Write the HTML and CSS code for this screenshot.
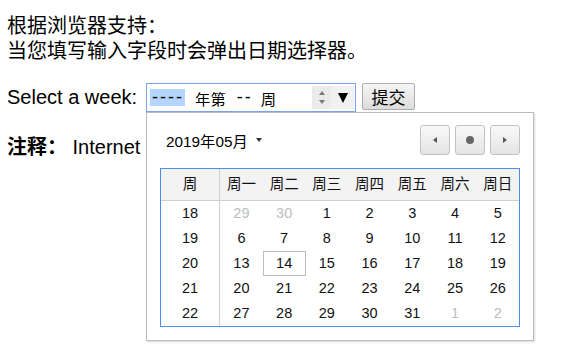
FILE: index.html
```html
<!DOCTYPE html>
<html lang="zh">
<head>
  <meta charset="UTF-8" />
  <title>week 选择器</title>
  <link rel="stylesheet" href="styles.css">
</head>
<body>
<p class="intro">根据浏览器支持：<br>当您填写输入字段时会弹出日期选择器。</p>

<form class="week-form">
  <label class="week-label">Select a week:</label>
  <div class="week-field">
    <div class="week-input">
      <span class="seg seg-active">----</span>
      <span class="txt txt-first">年第</span>
      <span class="seg seg-week">--</span>
      <span class="txt">周</span>
      <span class="spin"><i class="spin-up"></i><i class="spin-down"></i></span>
      <span class="drop"><i class="drop-arrow"></i></span>
    </div>

    <!-- 弹出的日期选择器 -->
    <div class="picker">
      <div class="picker-head">
        <div class="month">2019年05月<i class="caret"></i></div>
        <div class="nav">
          <span class="nav-btn"><i class="tri-left"></i></span>
          <span class="nav-btn"><i class="dot"></i></span>
          <span class="nav-btn"><i class="tri-right"></i></span>
        </div>
      </div>
      <div class="cal">
        <div class="hd wk">周</div><div class="hd">周一</div><div class="hd">周二</div><div class="hd">周三</div><div class="hd">周四</div><div class="hd">周五</div><div class="hd">周六</div><div class="hd">周日</div>

        <div class="day wk">18</div><div class="day other">29</div><div class="day other">30</div><div class="day">1</div><div class="day">2</div><div class="day">3</div><div class="day">4</div><div class="day">5</div>
        <div class="day wk">19</div><div class="day">6</div><div class="day">7</div><div class="day">8</div><div class="day">9</div><div class="day">10</div><div class="day">11</div><div class="day">12</div>
        <div class="day wk">20</div><div class="day">13</div><div class="day today">14</div><div class="day">15</div><div class="day">16</div><div class="day">17</div><div class="day">18</div><div class="day">19</div>
        <div class="day wk">21</div><div class="day">20</div><div class="day">21</div><div class="day">22</div><div class="day">23</div><div class="day">24</div><div class="day">25</div><div class="day">26</div>
        <div class="day wk">22</div><div class="day">27</div><div class="day">28</div><div class="day">29</div><div class="day">30</div><div class="day">31</div><div class="day other">1</div><div class="day other">2</div>
      </div>
    </div>
  </div>
  <button type="button" class="submit">提交</button>
</form>

<p class="note"><b>注释：</b> Internet Explorer 和 Firefox 不支持 type="week"。</p>
</body>
</html>
```

FILE: styles.css
```css
html {
  height: 100%;
}
body {
  margin: 0;
  padding: 14px 7px;
  min-height: 100%;
  box-sizing: border-box;
  font-family: "Liberation Sans", "Noto Sans CJK SC", sans-serif;
  font-size: 20px;
  color: #000;
  background: #fff;
}
.intro {
  margin: 0;
  line-height: 24.5px;
}
.week-form {
  display: flex;
  align-items: flex-start;
  margin-top: 20px;
}
.week-label {
  line-height: 29px;
  margin-right: 9px;
}
.week-field {
  position: relative;
}
.week-input {
  width: 210px;
  height: 29px;
  box-sizing: border-box;
  border: 1px solid #7aa7e8;
  display: flex;
  align-items: center;
  padding: 0 1px 0 3px;
  font-size: 15.3px;
  white-space: nowrap;
}
.seg {
  font-size: 18px;
  letter-spacing: 2px;
}
.seg-active {
  background: #b4d5fe;
  width: 35px;
  height: 17px;
  line-height: 17px;
  padding-left: 2px;
  box-sizing: border-box;
}
.seg-week {
  margin-left: 11px;
}
.txt {
  margin-left: 8px;
}
.txt-first {
  margin-left: 10px;
}
.spin {
  margin-left: auto;
  width: 19px;
  height: 23px;
  background: #ebebeb;
  display: flex;
  flex-direction: column;
  align-items: center;
  justify-content: center;
  gap: 5px;
}
.spin-up {
  border-left: 3.5px solid transparent;
  border-right: 3.5px solid transparent;
  border-bottom: 4px solid #7a7a7a;
}
.spin-down {
  border-left: 3.5px solid transparent;
  border-right: 3.5px solid transparent;
  border-top: 4px solid #7a7a7a;
}
.drop {
  width: 23px;
  height: 23px;
  background: #f1f1f1;
  display: flex;
  align-items: center;
  justify-content: center;
}
.drop-arrow {
  border-left: 5.5px solid transparent;
  border-right: 5.5px solid transparent;
  border-top: 10px solid #000;
}
.submit {
  margin-left: 6px;
  width: 53px;
  height: 27px;
  padding: 0;
  border: 1px solid #adadad;
  border-radius: 2px;
  background: linear-gradient(#f6f6f6, #dcdcdc);
  font-family: "Liberation Sans", "Noto Sans CJK SC", sans-serif;
  font-size: 17px;
  color: #000;
}
.note {
  margin: 23px 0 0;
  line-height: 24.5px;
}

/* 日期选择器弹层 */
.picker {
  position: absolute;
  left: 0;
  top: 29px;
  width: 388px;
  box-sizing: border-box;
  border: 1px solid #bbb;
  background: #fff;
  padding: 12px 13px 13px;
  box-shadow: 1px 1px 2px rgba(0,0,0,0.15);
  z-index: 10;
}
.picker-head {
  display: flex;
  align-items: center;
  height: 30px;
  margin-bottom: 13px;
}
.month {
  margin-left: 6px;
  font-size: 15.3px;
  display: flex;
  align-items: center;
}
.caret {
  margin-left: 8px;
  border-left: 3.5px solid transparent;
  border-right: 3.5px solid transparent;
  border-top: 4px solid #333;
}
.nav {
  margin-left: auto;
  display: flex;
  gap: 5px;
}
.nav-btn {
  width: 30px;
  height: 30px;
  box-sizing: border-box;
  border: 1px solid #c2c2c2;
  border-radius: 3px;
  background: linear-gradient(#f9f9f9, #e4e4e4);
  display: flex;
  align-items: center;
  justify-content: center;
}
.tri-left {
  border-top: 3.5px solid transparent;
  border-bottom: 3.5px solid transparent;
  border-right: 4px solid #555;
}
.tri-right {
  border-top: 3.5px solid transparent;
  border-bottom: 3.5px solid transparent;
  border-left: 4px solid #555;
}
.dot {
  width: 8px;
  height: 8px;
  border-radius: 50%;
  background: #666;
}
.cal {
  border: 1px solid #4a8ef2;
  display: grid;
  grid-template-columns: 59px repeat(7, 1fr);
  font-size: 14.5px;
  color: #111;
}
.hd {
  background: #f3f3f3;
  height: 32px;
  line-height: 31px;
  box-sizing: border-box;
  border-bottom: 1px solid #d0d0d0;
  text-align: center;
  font-size: 14.5px;
}
.day {
  height: 25px;
  line-height: 25px;
  text-align: center;
  box-sizing: border-box;
}
.wk {
  border-right: 1px solid #cfcfcf;
}
.other {
  color: #bdbdbd;
}
.today {
  border: 1px solid #bcbcbc;
  line-height: 23px;
}
```
